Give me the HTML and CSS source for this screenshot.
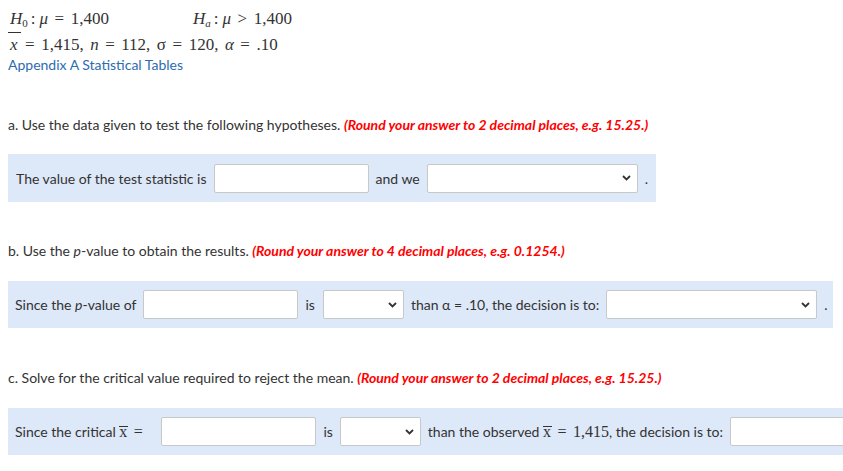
FILE: index.html
```html
<!DOCTYPE html>
<html>
<head>
<meta charset="utf-8">
<link rel="stylesheet" href="styles.css">
</head>
<body>
<div class="page">
  <div class="math">
    <div class="mline hyp">
      <span class="h0"><i>H</i><sub>0</sub><span class="colon">:</span><i>μ</i><span class="op">=</span>1,400</span>
      <span class="ha"><i>H</i><sub><i>a</i></sub><span class="colon">:</span><i>μ</i><span class="op">&gt;</span>1,400</span>
    </div>
    <div class="mline data"><span class="xbar"><i>x</i></span><span class="op">=</span>1,415,<span class="sp"></span><i>n</i><span class="op">=</span>112,<span class="sp"></span>σ<span class="op">=</span>120,<span class="sp"></span><i>α</i><span class="op">=</span>.10</div>
    <a class="appendix" href="#">Appendix A Statistical Tables</a>
  </div>

  <p class="q qa">a. Use the data given to test the following hypotheses. <em class="note">(Round your answer to 2 decimal places, e.g. 15.25.)</em></p>
  <div class="panel panel-a">
    <span>The value of the test statistic is</span>
    <span class="inp w155"></span>
    <span>and we</span>
    <span class="sel w210"><svg viewBox="0 0 9 6" width="9" height="6"><path d="M1 1 L4.5 4.5 L8 1" fill="none" stroke="#333" stroke-width="1.8"/></svg></span>
    <span>.</span>
  </div>

  <p class="q qb">b. Use the <i>p</i>-value to obtain the results. <em class="note">(Round your answer to 4 decimal places, e.g. 0.1254.)</em></p>
  <div class="panel panel-b">
    <span>Since the <i>p</i>-value of</span>
    <span class="inp w155"></span>
    <span class="is">is</span>
    <span class="sel w81"><svg viewBox="0 0 9 6" width="9" height="6"><path d="M1 1 L4.5 4.5 L8 1" fill="none" stroke="#333" stroke-width="1.8"/></svg></span>
    <span>than α = .10, the decision is to:</span>
    <span class="sel w211"><svg viewBox="0 0 9 6" width="9" height="6"><path d="M1 1 L4.5 4.5 L8 1" fill="none" stroke="#333" stroke-width="1.8"/></svg></span>
    <span>.</span>
  </div>

  <p class="q qc">c. Solve for the critical value required to reject the mean. <em class="note">(Round your answer to 2 decimal places, e.g. 15.25.)</em></p>
  <div class="panel panel-c">
    <span>Since the critical <span class="serif"><span class="ox">x</span><span class="op">=</span></span></span>
    <span class="inp w155 c-inp"></span>
    <span>is</span>
    <span class="sel w81"><svg viewBox="0 0 9 6" width="9" height="6"><path d="M1 1 L4.5 4.5 L8 1" fill="none" stroke="#333" stroke-width="1.8"/></svg></span>
    <span>than the observed <span class="serif"><span class="ox">x</span><span class="op">=</span>1,415</span>, the decision is to:</span>
    <span class="inp w120"></span>
  </div>
</div>
</body>
</html>
```

FILE: styles.css
```css
html, body {
  margin: 0;
  padding: 0;
  background: #fff;
  overflow: hidden;
}
.page {
  padding: 0 0 0 8px;
  font-family: Lato, "Liberation Sans", sans-serif;
  font-size: 14px;
  color: #333;
  width: 843px;
  box-sizing: border-box;
}
.math {
  font-family: "Liberation Serif", "Times New Roman", serif;
  font-size: 17px;
  color: #333;
  padding-top: 9px;
}
.mline {
  height: 20px;
  line-height: 20px;
  white-space: nowrap;
}
.hyp {
  display: flex;
  padding-left: 2px;
}
.h0 {
  width: 183px;
}
.mline sub {
  font-size: 11px;
  vertical-align: -3px;
  line-height: 0;
}
.colon {
  margin: 0 4px 0 3px;
}
.op {
  display: inline-block;
  margin: 0 6.5px;
}
.sp {
  display: inline-block;
  width: 6.5px;
}
.data {
  margin-top: 6px;
  padding-left: 1px;
}
.xbar {
  display: inline-block;
  position: relative;
  padding: 0 1px;
}
.xbar::before {
  content: "";
  position: absolute;
  left: -1px;
  right: -2px;
  top: -3px;
  border-top: 1px solid #333;
}
.appendix {
  display: block;
  margin-top: 1px;
  font-family: Lato, "Liberation Sans", sans-serif;
  font-size: 14px;
  color: #2c6cb0;
  text-decoration: none;
  line-height: 18px;
}
.q {
  margin: 0;
  line-height: 20px;
  white-space: nowrap;
}
.qa { margin-top: 41px; }
.qb { margin-top: 39px; }
.qc { margin-top: 40px; }
.note {
  color: #f00;
  font-weight: bold;
  font-style: italic;
  letter-spacing: 0;
}
.panel {
  background: #dde8f8;
  display: flex;
  align-items: center;
  gap: 7px;
  padding: 0 7px;
  white-space: nowrap;
  margin-top: 20px;
  box-sizing: border-box;
}
.panel-a { width: 648px; height: 48px; margin-top: 19px; padding-left: 8px; }
.panel-b { width: 825px; height: 47px; }
.panel-c { width: 860px; height: 47px; }
.inp, .sel {
  display: inline-flex;
  align-items: center;
  justify-content: flex-end;
  height: 29px;
  box-sizing: border-box;
  background: #fff;
  border: 1px solid #c8c8c8;
  border-radius: 2px;
  flex: none;
  padding-right: 6px;
}
.is { margin-right: 1px; }
.w155 { width: 155px; }
.w210 { width: 211px; }
.w211 { width: 211px; }
.w81 { width: 81px; }
.w120 { width: 120px; }
.c-inp { margin-left: 5px; }
.serif {
  font-family: "Liberation Serif", "Times New Roman", serif;
  font-size: 16px;
}
.ox {
  position: relative;
  display: inline-block;
  line-height: 1;
}
.ox::before {
  content: "";
  position: absolute;
  left: 0;
  right: -1px;
  top: 2px;
  border-top: 1px solid #333;
}
```
